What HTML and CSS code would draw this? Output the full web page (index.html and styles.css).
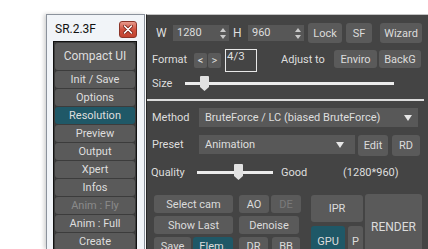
FILE: index.html
```html
<!DOCTYPE html>
<html lang="en">
<head>
    <meta charset="UTF-8">
    <meta name="viewport" content="width=device-width, initial-scale=1.0">
    <title>SR.2.3F</title>
    <link rel="stylesheet" href="styles.css">
</head>
<body>
    <div class="screen">
        <div class="win">
            <div class="titlebar">
                <span class="title">SR.2.3F</span>
                <span class="close">
                    <svg width="10" height="9" viewBox="0 0 10 9">
                        <path d="M1.5 1 L8.5 8 M8.5 1 L1.5 8" stroke="#7a2418" stroke-width="3.2" stroke-linecap="round"/>
                        <path d="M1.5 1 L8.5 8 M8.5 1 L1.5 8" stroke="#ffffff" stroke-width="1.6" stroke-linecap="round"/>
                    </svg>
                </span>
            </div>
            <div class="menu">
                <div class="mbtn big">Compact UI</div>
                <div class="mbtn">Init / Save</div>
                <div class="mbtn">Options</div>
                <div class="mbtn active">Resolution</div>
                <div class="mbtn">Preview</div>
                <div class="mbtn">Output</div>
                <div class="mbtn">Xpert</div>
                <div class="mbtn">Infos</div>
                <div class="mbtn disabled">Anim : Fly</div>
                <div class="mbtn">Anim : Full</div>
                <div class="mbtn">Create</div>
            </div>
        </div>

        <div class="panel">
            <div class="row r1">
                <span class="lbl lbl-w">W</span>
                <div class="field">1280
                    <svg class="spin" width="6" height="11" viewBox="0 0 6 11"><path d="M3 0 L6 4 L0 4 Z M3 11 L6 7 L0 7 Z" fill="#c8c8c8"/></svg>
                </div>
                <span class="lbl lbl-h">H</span>
                <div class="field">960
                    <svg class="spin" width="6" height="11" viewBox="0 0 6 11"><path d="M3 0 L6 4 L0 4 Z M3 11 L6 7 L0 7 Z" fill="#c8c8c8"/></svg>
                </div>
                <div class="btn b-lock">Lock</div>
                <div class="btn b-sf">SF</div>
                <div class="btn b-wizard">Wizard</div>
            </div>

            <div class="row r2">
                <span class="lbl lbl-format">Format</span>
                <div class="btn b-arrow">&lt;</div>
                <div class="btn b-arrow b-next">&gt;</div>
                <div class="ratio">4/3</div>
                <span class="lbl lbl-adjust">Adjust to</span>
                <div class="btn b-enviro">Enviro</div>
                <div class="btn b-backg">BackG</div>
            </div>

            <div class="row r3">
                <span class="lbl lbl-size">Size</span>
                <div class="track t-size">
                    <svg class="thumb" width="9" height="15" viewBox="0 0 9 15"><path d="M1 0 H8 Q9 0 9 1 V11 L4.5 15 L0 11 V1 Q0 0 1 0 Z" fill="#e2e2e2"/></svg>
                </div>
            </div>

            <div class="sep"></div>

            <div class="row r-method">
                <span class="lbl lbl-method">Method</span>
                <div class="select s-method">
                    <span>BruteForce / LC (biased BruteForce)</span>
                    <svg width="8" height="6" viewBox="0 0 8 6"><path d="M0 0 H8 L4 6 Z" fill="#e6e6e6"/></svg>
                </div>
            </div>

            <div class="row r-preset">
                <span class="lbl lbl-method">Preset</span>
                <div class="select s-preset">
                    <span>Animation</span>
                    <svg width="8" height="6" viewBox="0 0 8 6"><path d="M0 0 H8 L4 6 Z" fill="#e6e6e6"/></svg>
                </div>
                <div class="btn b-edit">Edit</div>
                <div class="btn b-rd">RD</div>
            </div>

            <div class="row r-quality">
                <span class="lbl lbl-quality">Quality</span>
                <div class="track t-quality">
                    <svg class="thumb" width="9" height="16" viewBox="0 0 9 16"><path d="M1 0 H8 Q9 0 9 1 V12 L4.5 16 L0 12 V1 Q0 0 1 0 Z" fill="#e2e2e2"/></svg>
                </div>
                <span class="lbl lbl-good">Good</span>
                <span class="lbl">(1280*960)</span>
            </div>

            <div class="bottom">
                <div class="tools">
                    <div class="trow">
                        <div class="btn w-wide">Select cam</div>
                        <div class="btn w-ao">AO</div>
                        <div class="btn w-de disabled">DE</div>
                    </div>
                    <div class="trow">
                        <div class="btn w-wide">Show Last</div>
                        <div class="btn w-denoise">Denoise</div>
                    </div>
                    <div class="trow">
                        <div class="btn w-save">Save</div>
                        <div class="btn w-elem active">Elem.</div>
                        <div class="btn w-dr">DR</div>
                        <div class="btn w-bb">BB</div>
                    </div>
                </div>
                <div class="ipr-col">
                    <div class="btn b-ipr">IPR</div>
                    <div class="ipr-row">
                        <div class="btn b-gpu active">GPU</div>
                        <div class="btn b-p">P</div>
                    </div>
                </div>
                <div class="btn b-render">RENDER</div>
            </div>
        </div>
    </div>
</body>
</html>
```

FILE: styles.css
```css
body {
    margin: 0;
    background: #ffffff;
    font-family: Roboto, "Open Sans", sans-serif;
    overflow: hidden;
}

.screen {
    display: flex;
    height: 249px;
    padding: 14px 0 0 46px;
    box-sizing: border-box;
    overflow: hidden;
}

/* left floating window */
.win {
    width: 99px;
    flex-shrink: 0;
    box-sizing: border-box;
    background: #f1f4f8;
    border: 1px solid #8b929c;
    border-bottom: none;
    padding: 0 7px 0 6px;
    box-shadow: -2px 0 4px rgba(0, 0, 0, 0.18);
}

.titlebar {
    height: 26px;
    display: flex;
    align-items: center;
    justify-content: space-between;
}

.title {
    font-size: 12px;
    color: #111;
    padding-left: 2px;
    margin-top: 2px;
}

.close {
    width: 18px;
    height: 17px;
    box-sizing: border-box;
    margin-top: 3px;
    border: 1px solid #8c3428;
    border-radius: 3px;
    background: linear-gradient(#e89a8c, #d0513f 50%, #c24330);
    display: flex;
    align-items: center;
    justify-content: center;
}

.menu {
    border: 1px solid #111;
    background: #3c3c3c;
    padding: 1px;
    display: flex;
    flex-direction: column;
    gap: 1px;
    height: 230px;
}

.mbtn {
    height: 17px;
    line-height: 17px;
    flex-shrink: 0;
    background: #5a5a5a;
    border-radius: 3px;
    color: #dedede;
    font-size: 11px;
    text-align: center;
}

.mbtn.big {
    height: 27px;
    line-height: 27px;
    font-size: 12px;
}

.mbtn.active {
    background: #1f5867;
}

.mbtn.disabled {
    color: #8a8a8a;
}

/* right render panel */
.panel {
    flex: 1;
    margin-left: 1px;
    background: #444444;
    border-top: 1px solid #c4c4c4;
    border-left: 1px solid #262626;
    color: #dedede;
    font-size: 11px;
}

.row {
    display: flex;
    align-items: center;
}

.lbl {
    box-sizing: border-box;
    white-space: nowrap;
    flex-shrink: 0;
}

.btn {
    box-sizing: border-box;
    background: #5a5a5a;
    border-radius: 3px;
    color: #dcdcdc;
    display: flex;
    align-items: center;
    justify-content: center;
    flex-shrink: 0;
}

.btn.active {
    background: #1f5867;
}

.btn.disabled {
    color: #7a7a7a;
}

.r1 {
    height: 20px;
    margin-top: 8px;
}

.lbl-w {
    width: 26px;
    padding-left: 9px;
    font-size: 12px;
}

.lbl-h {
    width: 19px;
    padding-left: 4px;
    font-size: 12px;
}

.field {
    position: relative;
    width: 56px;
    height: 16px;
    line-height: 16px;
    background: #575757;
    padding-left: 4px;
    box-sizing: border-box;
}

.spin {
    position: absolute;
    right: 3px;
    top: 3px;
}

.b-lock { width: 34px; height: 20px; margin-left: 4px; }
.b-sf { width: 26px; height: 20px; margin-left: 4px; }
.b-wizard { width: 42px; height: 20px; margin-left: 8px; }

.r2 {
    height: 22px;
    margin-top: 5px;
}

.lbl-format {
    width: 47px;
    padding-left: 5px;
}

.b-arrow {
    width: 13px;
    height: 15px;
    margin-top: 2px;
    font-size: 11px;
    border-radius: 2px;
}

.b-next {
    margin-left: 1px;
}

.ratio {
    align-self: flex-start;
    margin: 1px 0 0 4px;
    width: 32px;
    height: 23px;
    box-sizing: border-box;
    border: 1px solid #e8e8e8;
    padding: 0 0 0 1px;
    line-height: 13px;
    font-size: 11.5px;
}

.lbl-adjust {
    width: 53px;
    margin-left: 24px;
}

.b-enviro { width: 43px; height: 18px; }
.b-backg { width: 42px; height: 18px; margin-left: 2px; }

.r3 {
    height: 18px;
    margin-top: 4px;
}

.lbl-size {
    width: 38px;
    padding-left: 5px;
}

.track {
    position: relative;
    height: 3px;
    background: #ececec;
}

.t-size {
    width: 209px;
}

.thumb {
    position: absolute;
    top: -6px;
}

.t-size .thumb {
    left: 15px;
}

.sep {
    height: 2px;
    background: #dcdcdc;
    margin: 7px 4px 0 0;
}

.r-method {
    height: 19px;
    margin-top: 7px;
}

.lbl-method {
    width: 52px;
    padding-left: 5px;
}

.select {
    height: 19px;
    box-sizing: border-box;
    background: #585858;
    display: flex;
    align-items: center;
    justify-content: space-between;
    padding: 0 6px;
    flex-shrink: 0;
}

.s-method {
    width: 219px;
    padding-right: 6px;
}

.r-preset {
    height: 21px;
    margin-top: 8px;
    align-items: flex-start;
}

.r-preset .lbl {
    line-height: 19px;
}

.s-preset {
    width: 156px;
    padding-right: 11px;
}

.b-edit { width: 30px; height: 21px; margin-left: 3px; }
.b-rd { width: 28px; height: 21px; margin-left: 4px; }

.r-quality {
    height: 16px;
    margin-top: 8px;
}

.lbl-quality {
    width: 50px;
    padding-left: 4px;
}

.t-quality {
    width: 76px;
}

.t-quality .thumb {
    left: 37px;
    top: -7px;
}

.lbl-good {
    width: 62px;
    margin-left: 8px;
}

.bottom {
    display: flex;
    align-items: flex-start;
    margin-top: 14px;
    padding-left: 7px;
}

.tools {
    display: flex;
    flex-direction: column;
    gap: 3px;
    margin-top: 1px;
}

.trow {
    display: flex;
    height: 18px;
}

.trow .btn {
    height: 18px;
}

.w-wide { width: 79px; }
.w-ao { width: 30px; margin-left: 6px; }
.w-de { width: 30px; margin-left: 2px; }
.w-denoise { width: 60px; margin-left: 6px; }
.w-save { width: 37px; }
.w-elem { width: 40px; margin-left: 2px; }
.w-dr { width: 29px; margin-left: 6px; }
.w-bb { width: 28px; margin-left: 4px; }

.ipr-col {
    margin: 1px 0 0 10px;
    display: flex;
    flex-direction: column;
    gap: 4px;
}

.b-ipr {
    width: 52px;
    height: 27px;
}

.ipr-row {
    display: flex;
    gap: 3px;
}

.b-gpu { width: 34px; height: 30px; }
.b-p { width: 15px; height: 30px; }

.b-render {
    width: 57px;
    height: 66px;
    margin-left: 2px;
    font-size: 12px;
}
```
